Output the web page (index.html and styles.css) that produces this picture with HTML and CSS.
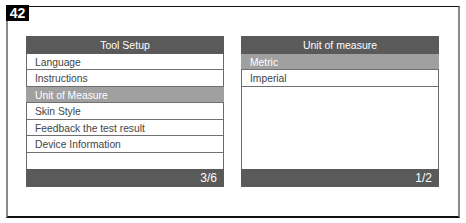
FILE: index.html
```html
<!DOCTYPE html>
<html>
<head>
<meta charset="utf-8">
<link rel="stylesheet" href="styles.css">
</head>
<body>
<div class="frame">
  <div class="badge">42</div>
  <div class="panels">
    <div class="panel">
      <div class="bar head">Tool Setup</div>
      <div class="list">
        <div class="row">Language</div>
        <div class="row">Instructions</div>
        <div class="row sel">Unit of Measure</div>
        <div class="row">Skin Style</div>
        <div class="row">Feedback the test result</div>
        <div class="row">Device Information</div>
        <div class="row blank"></div>
      </div>
      <div class="bar foot">3/6</div>
    </div>
    <div class="panel">
      <div class="bar head">Unit of measure</div>
      <div class="list">
        <div class="row sel">Metric</div>
        <div class="row">Imperial</div>
      </div>
      <div class="bar foot">1/2</div>
    </div>
  </div>
</div>
</body>
</html>
```
FILE: styles.css
```css
html, body {
  margin: 0;
  padding: 0;
  background: #fff;
}
body {
  font-family: "Liberation Sans", Arial, sans-serif;
  width: 466px;
  height: 223px;
  overflow: hidden;
}
.frame {
  position: relative;
  box-sizing: border-box;
  margin: 6px 0 0 6px;
  width: 454px;
  height: 212px;
  border-top: 1px solid #111;
  border-right: 2px solid #8a8a8a;
  border-bottom: 2px solid #111;
  border-left: 2px solid #8a8a8a;
  padding: 29px 0 0 18px;
}
.badge {
  position: absolute;
  left: -2px;
  top: -2px;
  width: 23px;
  height: 16px;
  background: #000;
  color: #fff;
  font-weight: bold;
  font-size: 14px;
  line-height: 16px;
  text-align: center;
}
.panels {
  display: flex;
  gap: 17px;
}
.panel {
  width: 198px;
  height: 151px;
  display: flex;
  flex-direction: column;
}
.bar {
  height: 18px;
  background: #5a5a5a;
  color: #fff;
  flex: none;
}
.head {
  font-size: 10.5px;
  line-height: 18px;
  text-align: center;
}
.foot {
  font-size: 12px;
  line-height: 19px;
  text-align: right;
  padding-right: 7px;
}
.list {
  flex: 1;
  display: flex;
  flex-direction: column;
  border-left: 1px solid #6a6a6a;
  border-right: 1px solid #6a6a6a;
}
.row {
  box-sizing: border-box;
  height: 16.43px;
  flex: none;
  border-bottom: 1px solid #707070;
  padding-left: 8px;
  font-size: 10.3px;
  line-height: 17px;
  color: #444;
}
.row.sel {
  background: #a0a0a0;
  color: #fff;
  margin: 0 -1px;
  padding-left: 9px;
}
.row.blank {
  border-bottom: none;
}
```
